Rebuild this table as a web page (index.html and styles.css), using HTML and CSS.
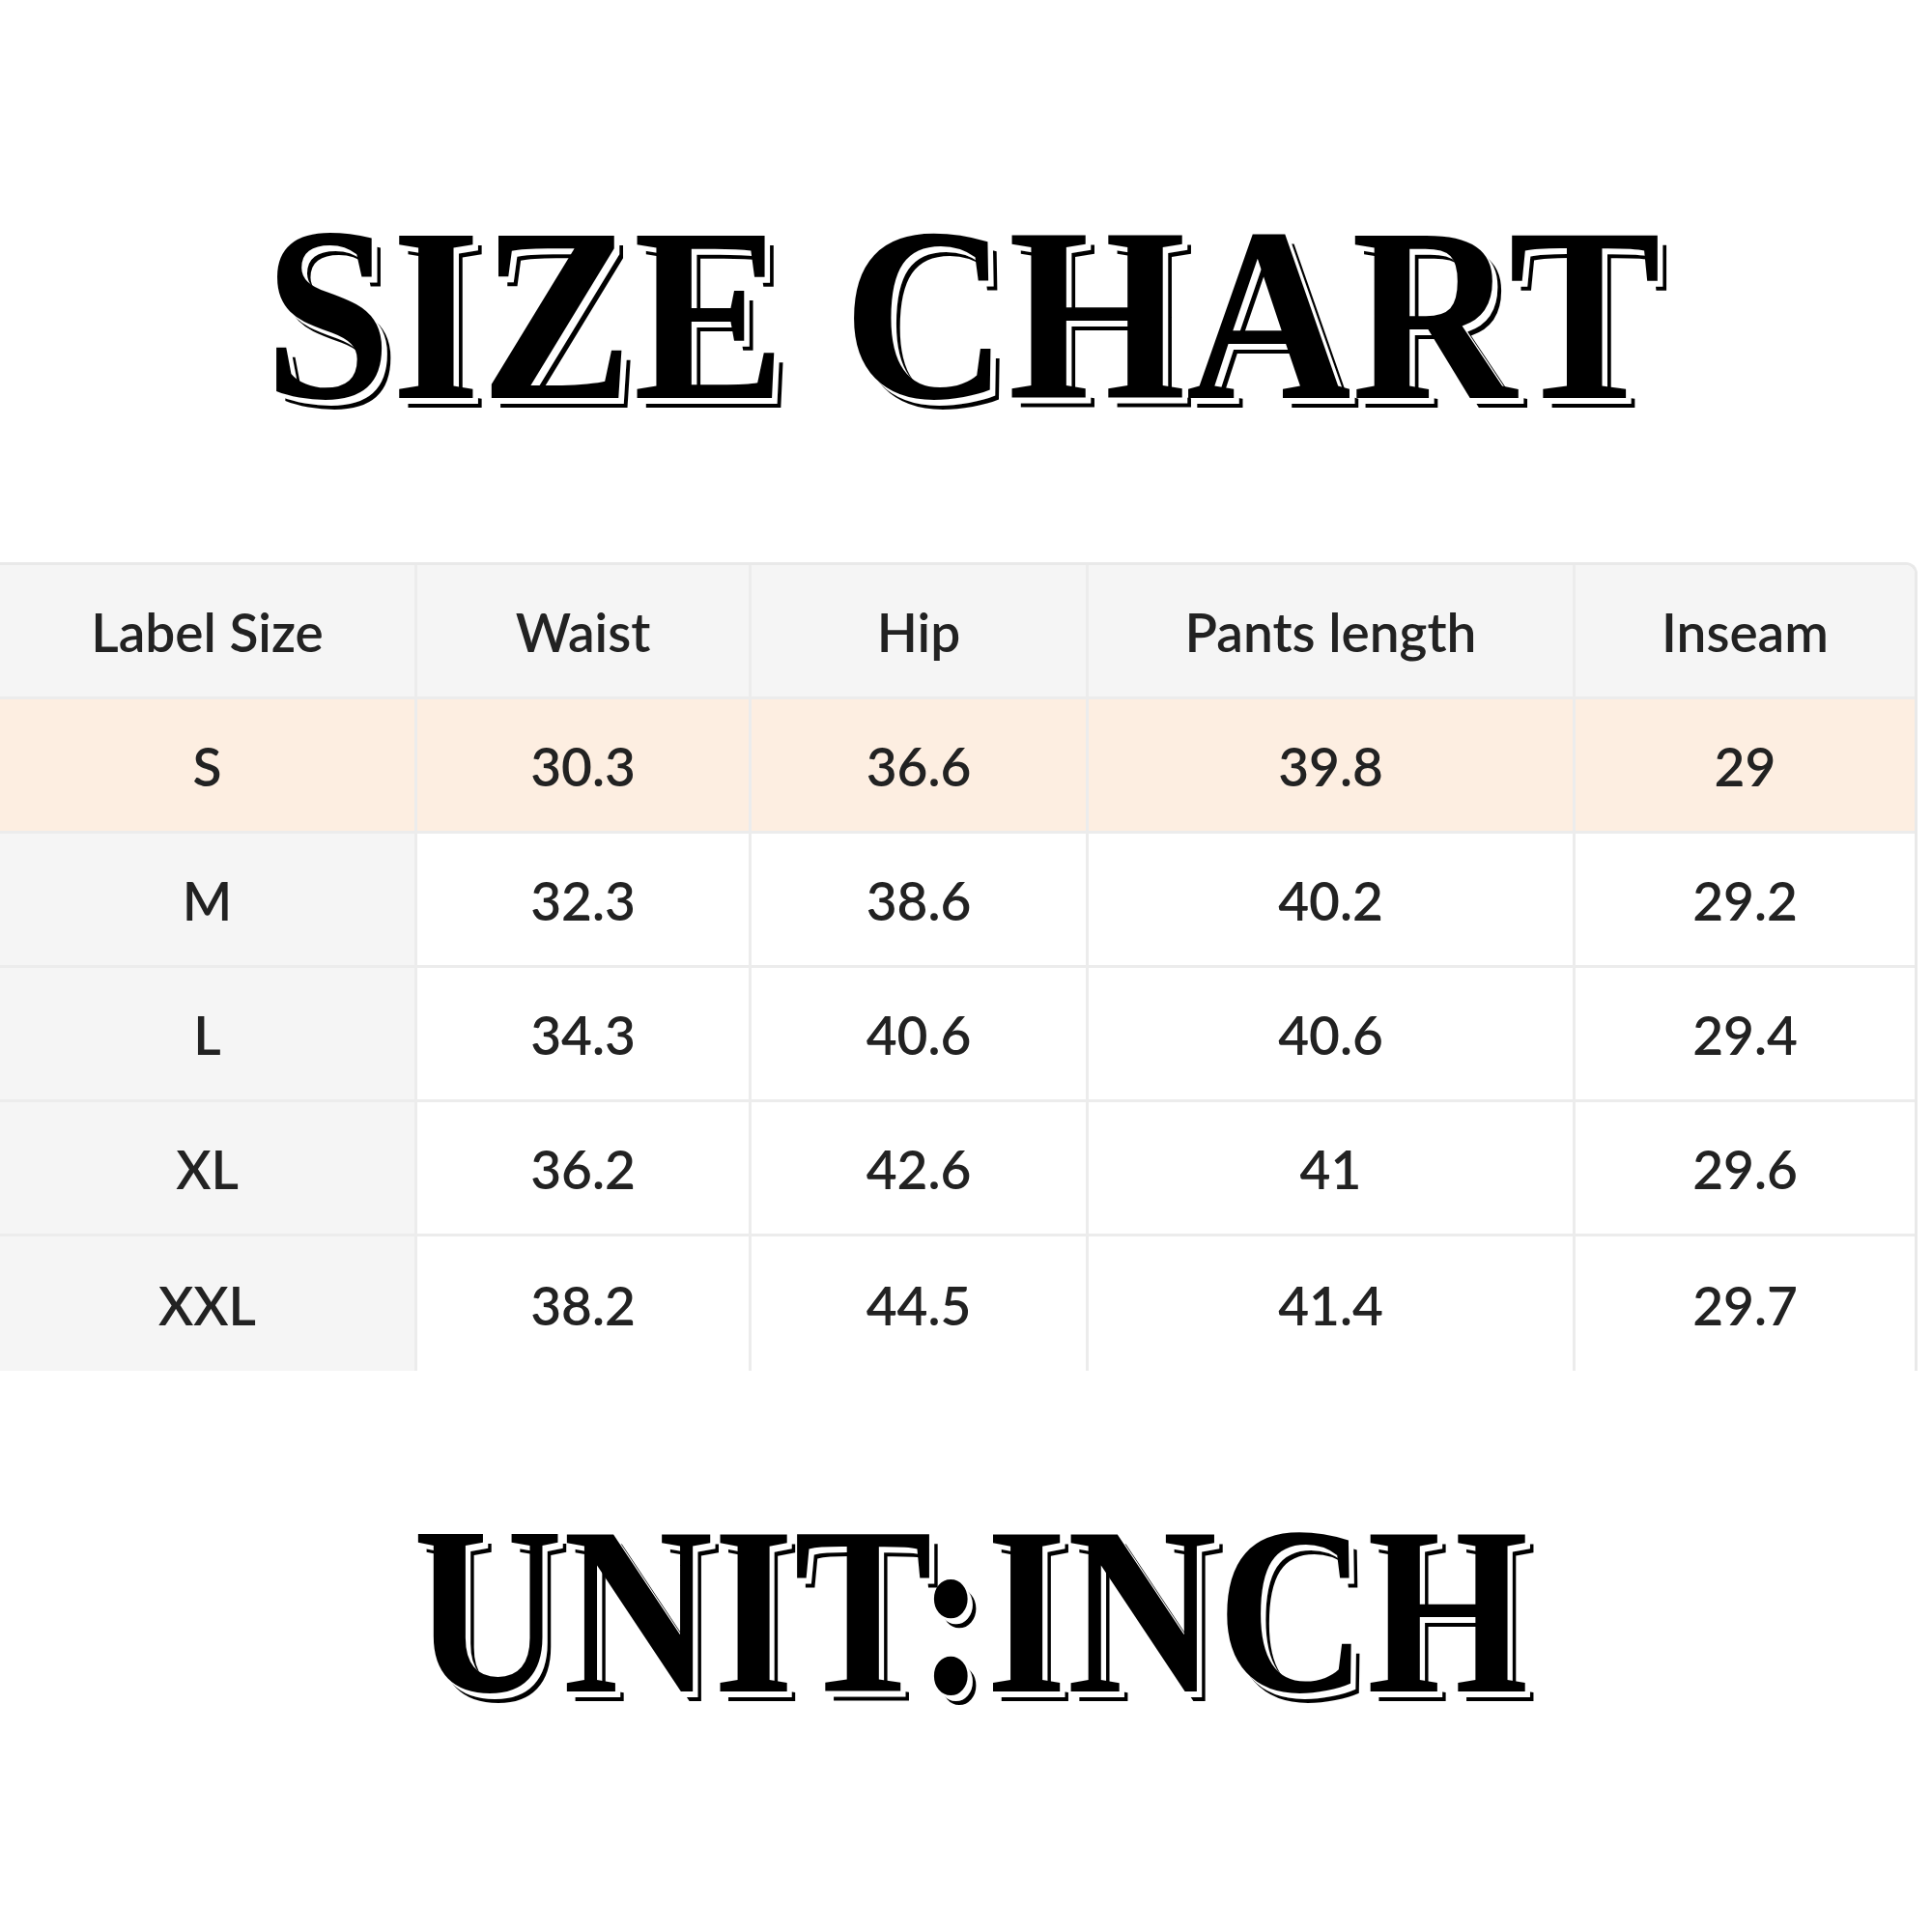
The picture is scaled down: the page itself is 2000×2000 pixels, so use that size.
FILE: index.html
```html
<!DOCTYPE html>
<html lang="en">
<head>
<meta charset="utf-8">
<title>Size Chart</title>
<link rel="stylesheet" href="styles.css">
</head>
<body>
<div class="page">
  <h1 class="title title-top"><span class="title-text">SIZE CHART</span></h1>
  <div class="chart" role="table">
    <div class="cell head first">Label Size</div>
    <div class="cell head">Waist</div>
    <div class="cell head">Hip</div>
    <div class="cell head">Pants length</div>
    <div class="cell head last">Inseam</div>

    <div class="cell hl first">S</div>
    <div class="cell hl">30.3</div>
    <div class="cell hl">36.6</div>
    <div class="cell hl">39.8</div>
    <div class="cell hl last">29</div>

    <div class="cell first">M</div>
    <div class="cell">32.3</div>
    <div class="cell">38.6</div>
    <div class="cell">40.2</div>
    <div class="cell last">29.2</div>

    <div class="cell first">L</div>
    <div class="cell">34.3</div>
    <div class="cell">40.6</div>
    <div class="cell">40.6</div>
    <div class="cell last">29.4</div>

    <div class="cell first">XL</div>
    <div class="cell">36.2</div>
    <div class="cell">42.6</div>
    <div class="cell">41</div>
    <div class="cell last">29.6</div>

    <div class="cell first bottom">XXL</div>
    <div class="cell bottom">38.2</div>
    <div class="cell bottom">44.5</div>
    <div class="cell bottom">41.4</div>
    <div class="cell last bottom">29.7</div>
  </div>
  <h2 class="title title-bottom"><span class="title-text">UNIT:INCH</span></h2>
</div>
</body>
</html>
```

FILE: styles.css
```css
html, body {
  margin: 0;
  padding: 0;
  background: #ffffff;
}

.page {
  width: 2000px;
  height: 2000px;
  display: flex;
  flex-direction: column;
  align-items: flex-start;
}

.title {
  margin: 0;
  width: 2000px;
  text-align: center;
  font-family: "Liberation Serif", "Times New Roman", serif;
  font-weight: bold;
  color: #000;
  white-space: nowrap;
}

.title-text {
  display: inline-block;
  text-shadow: 6px 6px 0 #fff, 10px 10px 0 #000;
}

.title-top {
  margin-top: 198px;
  font-size: 256px;
  line-height: 256px;
}

.title-top .title-text {
  transform: scaleX(0.925);
  margin-left: -8px;
}

.title-bottom {
  margin-top: 125px;
  font-size: 248px;
  line-height: 248px;
}

.title-bottom .title-text {
  transform: scaleX(0.867);
  margin-left: 10px;
}

.chart {
  margin-top: 128px;
  width: 1985px;
  box-sizing: border-box;
  border-top: 3px solid #e9e9e9;
  border-right: 3px solid #e9e9e9;
  border-top-right-radius: 12px;
  overflow: hidden;
  display: grid;
  grid-template-columns: 432px 346px 349px 504px 1fr;
  grid-auto-rows: 139px;
  font-family: Lato, "Open Sans", sans-serif;
  font-size: 55px;
  font-weight: 600;
  color: #222222;
}

.cell {
  box-sizing: border-box;
  display: flex;
  align-items: center;
  justify-content: center;
  padding-top: 2px;
  border-right: 3px solid #ececec;
  border-bottom: 3px solid #ececec;
  background: #ffffff;
  white-space: nowrap;
}

.cell.last {
  border-right: none;
}

.cell.bottom {
  border-bottom: none;
}

.cell.first {
  background: #f5f5f5;
}

.cell.head {
  background: #f5f5f5;
}

.cell.hl {
  background: #fdeee1;
}
```
